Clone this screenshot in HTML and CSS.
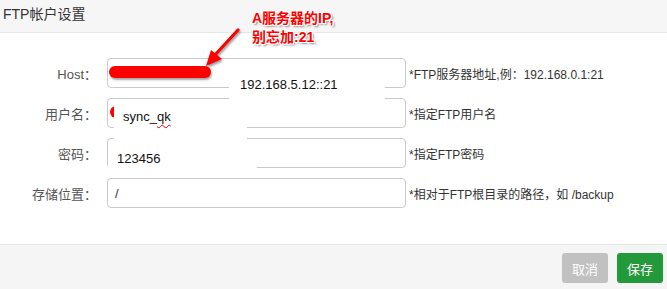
FILE: index.html
```html
<!DOCTYPE html>
<html>
<head>
<meta charset="utf-8">
<link rel="stylesheet" href="styles.css">
</head>
<body>
<div class="dialog">
  <div class="header">FTP帐户设置</div>
  <div class="form">
    <div class="row">
      <label class="label">Host：</label>
      <div class="input"></div>
      <span class="hint">*FTP服务器地址,例：192.168.0.1:21</span>
    </div>
    <div class="row">
      <label class="label">用户名：</label>
      <div class="input"></div>
      <span class="hint">*指定FTP用户名</span>
    </div>
    <div class="row">
      <label class="label">密码：</label>
      <div class="input"></div>
      <span class="hint">*指定FTP密码</span>
    </div>
    <div class="row">
      <label class="label">存储位置：</label>
      <div class="input"><span class="val">/</span></div>
      <span class="hint">*相对于FTP根目录的路径，如 /backup</span>
    </div>
  </div>
  <div class="footer">
    <button class="btn cancel">取消</button>
    <button class="btn save">保存</button>
  </div>

  <div class="redbar bar1"></div>
  <div class="redbar bar2"></div>
  <div class="patch p1">192.168.5.12::21</div>
  <div class="patch p2">sync_<span class="squig">qk</span></div>
  <div class="patch p3">123456</div>
  <svg class="arrow" width="60" height="60" viewBox="0 0 60 60">
    <line x1="46" y1="2" x2="22" y2="28" stroke="#f00" stroke-width="3.2" stroke-linecap="round"/>
    <polygon points="14,38 19,22 30,31" fill="#f00"/>
  </svg>
  <div class="note">A服务器的IP,<br>别忘加:21</div>
</div>
</body>
</html>
```
FILE: styles.css
```css
* { box-sizing: border-box; }
html, body { margin: 0; padding: 0; background: #fff; }
.dialog {
  position: relative;
  width: 667px;
  height: 289px;
  font-family: "Liberation Sans", "Noto Sans CJK SC", sans-serif;
  display: flex;
  flex-direction: column;
  overflow: hidden;
}
.header {
  height: 33px;
  background: #f6f6f6;
  border-bottom: 1px solid #e6e6e6;
  font-size: 14px;
  color: #333;
  padding: 5px 0 0 3px;
  line-height: 18px;
}
.form {
  flex: 1;
  padding-top: 25px;
  display: flex;
  flex-direction: column;
  gap: 10px;
}
.row {
  display: flex;
  align-items: center;
  height: 30px;
}
.label {
  width: 97px;
  text-align: right;
  font-size: 13px;
  color: #555;
  margin-right: 10px;
}
.input {
  width: 299px;
  height: 30px;
  border: 1px solid #cacaca;
  border-radius: 4px;
  background: #fff;
  display: flex;
  align-items: center;
  padding-left: 7px;
  font-size: 13px;
  color: #333;
}
.hint {
  margin-left: 3px;
  font-size: 12px;
  color: #333;
}
.footer {
  height: 45px;
  background: #f4f5f4;
  border-top: 1px solid #e4e6e4;
  display: flex;
  justify-content: flex-end;
  align-items: flex-start;
  padding: 8px 4px 0 0;
  gap: 9px;
}
.btn {
  width: 46px;
  height: 30px;
  border: 0;
  border-radius: 3px;
  color: #fff;
  font-size: 13px;
  font-family: "Liberation Sans", "Noto Sans CJK SC", sans-serif;
  padding: 0;
}
.cancel { background: #c1c1c1; }
.save { background: #22993a; }

.redbar {
  position: absolute;
  background: #f00;
  border-radius: 7px;
}
.bar1 {
  left: 109px; top: 66px; width: 102px; height: 12px;
  box-shadow: 1px 2px 2px rgba(0,0,0,0.35);
}
.bar2 { left: 110px; top: 106px; width: 20px; height: 12px; }
.patch {
  position: absolute;
  background: #fff;
  font-size: 13px;
  color: #111;
  display: flex;
  align-items: center;
}
.p1 { left: 229px; top: 70px; width: 156px; height: 30px; padding-left: 11px; padding-bottom: 2px; }
.p2 { left: 114px; top: 103px; width: 133px; height: 38px; padding-left: 9px; padding-bottom: 12px; }
.p3 { left: 108px; top: 145px; width: 149px; height: 27px; padding-left: 9px; padding-bottom: 1px; }
.squig { text-decoration: underline wavy #e00; text-decoration-thickness: 1px; text-underline-offset: 3px; }
.arrow {
  position: absolute;
  left: 192px; top: 28px;
  filter: drop-shadow(1px 2px 1px rgba(0,0,0,0.4));
}
.note {
  position: absolute;
  left: 252px; top: 9px;
  font-size: 14px;
  font-weight: bold;
  line-height: 19px;
  color: #f00;
  font-family: "Liberation Sans", "Noto Sans CJK SC", sans-serif;
  text-shadow: -1px -1px 0 #fff, 1px -1px 0 #fff, -1px 1px 0 #fff, 1px 1px 0 #fff, 2px 2px 2px rgba(0,0,0,0.45);
}
```
